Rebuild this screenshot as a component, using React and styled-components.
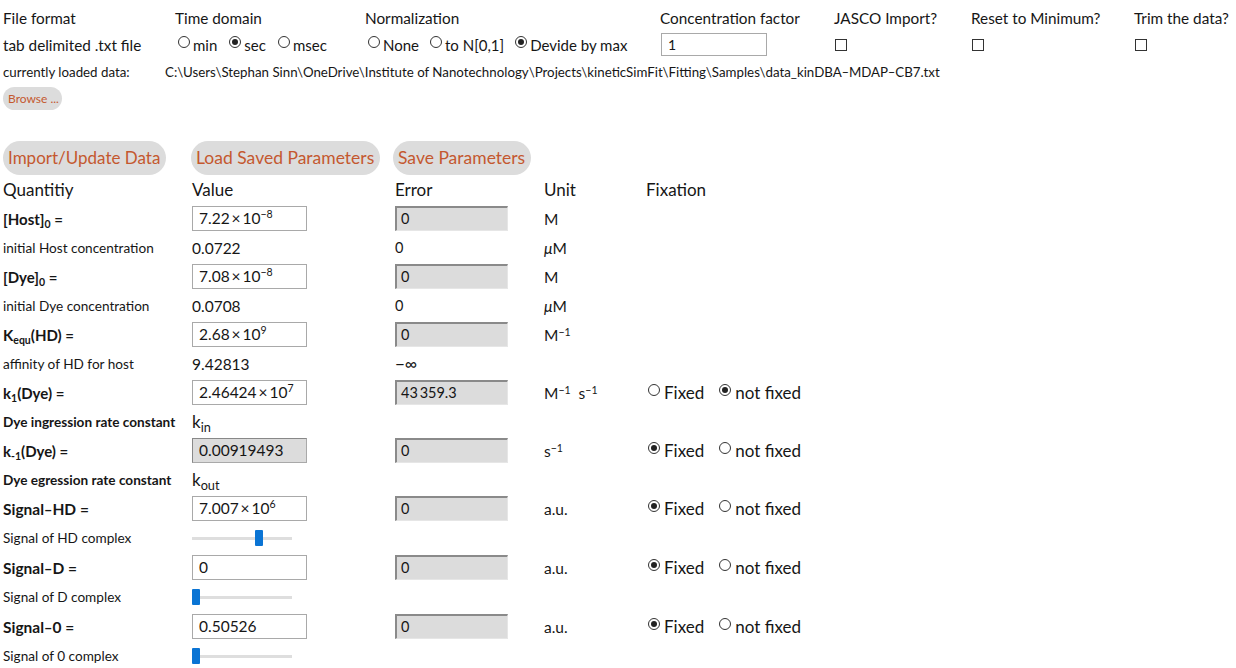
import React from 'react';
import styled, { createGlobalStyle } from 'styled-components';

const Global = createGlobalStyle`
  html, body { margin: 0; padding: 0; background: #fff; }
  body { font-family: Lato, "Noto Sans", sans-serif; color: #161616; }
  * { box-sizing: border-box; }
`;

const Page = styled.div`
  padding-left: 3px;
  width: 1236px;
`;

const TopGrid = styled.div`
  display: grid;
  grid-template-columns: 172px 190px 295px 174px 137px 163px 1fr;
  grid-template-rows: 27px 27px;
  padding-top: 4px;
  align-items: center;
  font-size: 15.3px;
  white-space: nowrap;
`;

const RadioGroup = styled.div`
  display: flex;
  align-items: center;
  gap: ${p => p.$gap || 6}px;
  padding-left: ${p => p.$pad || 0}px;
  font-size: ${p => p.$size || 15}px;
`;

const RadioItem = styled.span`
  display: inline-flex;
  align-items: center;
  gap: ${p => p.$inner || 3}px;
`;

const Dot = styled.span`
  width: 12px;
  height: 12px;
  border-radius: 50%;
  border: 1px solid #333;
  position: relative;
  top: -3px;
  background: #fff;
  flex: none;
  &::after {
    content: '';
    display: ${p => (p.$on ? 'block' : 'none')};
    position: absolute;
    left: 2px;
    top: 2px;
    width: 6px;
    height: 6px;
    border-radius: 50%;
    background: #222;
  }
`;

const Radio = ({ on, inner, children }) => (
  <RadioItem $inner={inner}>
    <Dot $on={on} />
    {children}
  </RadioItem>
);

const FactorInput = styled.div`
  width: 106px;
  height: 23px;
  border: 1px solid #a9a9a9;
  padding-left: 6px;
  font-size: 14px;
  line-height: 21px;
  margin-left: 1px;
`;

const Check = styled.span`
  display: block;
  width: 12px;
  height: 12px;
  border: 1px solid #333;
  margin-left: 1px;
`;

const PathRow = styled.div`
  display: grid;
  grid-template-columns: 162px 1fr;
  height: 27px;
  align-items: center;
  font-size: 13.3px;
  white-space: nowrap;
`;

const Browse = styled.div`
  margin-top: 2px;
  width: 59px;
  height: 23px;
  border-radius: 12px;
  background: #dcdcdc;
  color: #c4582f;
  font-size: 12px;
  line-height: 23px;
  padding-left: 5px;
`;

const ButtonRow = styled.div`
  margin-top: 31px;
  height: 34px;
  display: grid;
  grid-template-columns: 188px 202px 1fr;
`;

const PillButton = styled.div`
  height: 34px;
  border-radius: 17px;
  background: #dcdcdc;
  color: #c4582f;
  font-size: ${p => p.$size || 17}px;
  line-height: 34px;
  padding: 0 6px 0 5px;
  justify-self: start;
  white-space: nowrap;
`;

const Table = styled.div`
  display: grid;
  grid-template-columns: 189px 203px 149px 101px 1fr;
  grid-template-rows: 29px repeat(10, 29px) 29px 30px 29px 30px 29px 30px;
  align-items: center;
  white-space: nowrap;
`;

const Head = styled.div`
  font-size: 17px;
  padding-left: ${p => p.$pad || 0}px;
`;

const Label = styled.div`
  font-weight: 700;
  font-size: ${p => p.$size || 15}px;
  sub { font-size: 0.7em; vertical-align: -0.25em; line-height: 0; }
`;

const SubLabel = styled.div`
  font-size: 13.6px;
  font-weight: ${p => (p.$bold ? 700 : 400)};
`;

const ValueBox = styled.div`
  width: 115px;
  height: 25px;
  border: 1px solid #a9a9a9;
  background: ${p => (p.$disabled ? '#dcdcdc' : '#fff')};
  border-top-color: ${p => (p.$disabled ? '#888' : '#a9a9a9')};
  border-left-color: ${p => (p.$disabled ? '#888' : '#a9a9a9')};
  padding-left: 6px;
  font-size: 15.5px;
  line-height: 23px;
  sup { font-size: 0.68em; vertical-align: 0.55em; line-height: 0; }
`;

const ErrorBox = styled.div`
  width: 113px;
  height: 25px;
  background: #dcdcdc;
  border-top: 2px solid #8a8a8a;
  border-left: 2px solid #8a8a8a;
  border-right: 1px solid #e6e6e6;
  border-bottom: 1px solid #e6e6e6;
  padding-left: 4px;
  font-size: 14.5px;
  line-height: 22px;
`;

const Plain = styled.div`
  font-size: ${p => p.$size || 15.5}px;
  padding-left: ${p => p.$pad || 0}px;
  sup { font-size: 0.68em; vertical-align: 0.5em; line-height: 0; }
  sub { font-size: 0.75em; vertical-align: -0.3em; line-height: 0; }
  i { font-style: italic; }
`;

const Slider = styled.div`
  position: relative;
  width: 100px;
  height: 16px;
  &::before {
    content: '';
    position: absolute;
    left: 0;
    right: 0;
    top: 7px;
    height: 3px;
    background: #dedede;
  }
`;

const Thumb = styled.span`
  position: absolute;
  top: 0;
  width: 8px;
  height: 16px;
  background: #0a74d4;
  border-radius: 1px;
`;

const Empty = styled.div``;

const Fix = ({ fixed }) => (
  <RadioGroup $gap={15} $size={17} $pad={3}>
    <Radio on={fixed} inner={4}>Fixed</Radio>
    <Radio on={!fixed} inner={4}>not fixed</Radio>
  </RadioGroup>
);

const Sci = ({ m, e }) => (
  <>
    {m}&thinsp;×&thinsp;10<sup>{e}</sup>
  </>
);

export default function App() {
  return (
    <Page>
      <Global />
      <TopGrid>
        <div>File format</div>
        <div>Time domain</div>
        <div>Normalization</div>
        <div>Concentration factor</div>
        <div>JASCO Import?</div>
        <div>Reset to Minimum?</div>
        <div>Trim the data?</div>

        <div>tab delimited .txt file</div>
        <RadioGroup $pad={3} $gap={12}>
          <Radio>min</Radio>
          <Radio on>sec</Radio>
          <Radio>msec</Radio>
        </RadioGroup>
        <RadioGroup $pad={3} $gap={11}>
          <Radio>None</Radio>
          <Radio>to N[0,1]</Radio>
          <Radio on>Devide by max</Radio>
        </RadioGroup>
        <FactorInput>1</FactorInput>
        <Check />
        <Check />
        <Check />
      </TopGrid>

      <PathRow>
        <div>currently loaded data:</div>
        <div>
          C:\Users\Stephan Sinn\OneDrive\Institute of Nanotechnology\Projects\kineticSimFit\Fitting\Samples\data_kinDBA‒MDAP‒CB7.txt
        </div>
      </PathRow>
      <Browse>Browse ...</Browse>

      <ButtonRow>
        <PillButton>Import/Update Data</PillButton>
        <PillButton $size={17.5}>Load Saved Parameters</PillButton>
        <PillButton $size={17.5}>Save Parameters</PillButton>
      </ButtonRow>

      <Table>
        <Head>Quantitiy</Head>
        <Head>Value</Head>
        <Head>Error</Head>
        <Head>Unit</Head>
        <Head $pad={1}>Fixation</Head>

        <Label>[Host]<sub>0</sub> =</Label>
        <ValueBox><Sci m="7.22" e="−8" /></ValueBox>
        <ErrorBox>0</ErrorBox>
        <Plain>M</Plain>
        <Empty />

        <SubLabel>initial Host concentration</SubLabel>
        <Plain>0.0722</Plain>
        <Plain $size={14.5}>0</Plain>
        <Plain><i>μ</i>M</Plain>
        <Empty />

        <Label>[Dye]<sub>0</sub> =</Label>
        <ValueBox><Sci m="7.08" e="−8" /></ValueBox>
        <ErrorBox>0</ErrorBox>
        <Plain>M</Plain>
        <Empty />

        <SubLabel>initial Dye concentration</SubLabel>
        <Plain>0.0708</Plain>
        <Plain $size={14.5}>0</Plain>
        <Plain><i>μ</i>M</Plain>
        <Empty />

        <Label>K<sub>equ</sub>(HD) =</Label>
        <ValueBox><Sci m="2.68" e="9" /></ValueBox>
        <ErrorBox>0</ErrorBox>
        <Plain>M<sup>−1</sup></Plain>
        <Empty />

        <SubLabel>affinity of HD for host</SubLabel>
        <Plain>9.42813</Plain>
        <Plain $size={17}>−∞</Plain>
        <Empty />
        <Empty />

        <Label>k<sub>1</sub>(Dye) =</Label>
        <ValueBox><Sci m="2.46424" e="7" /></ValueBox>
        <ErrorBox>43&thinsp;359.3</ErrorBox>
        <Plain>M<sup>−1</sup>&nbsp; s<sup>−1</sup></Plain>
        <Fix fixed={false} />

        <SubLabel $bold>Dye ingression rate constant</SubLabel>
        <Plain $size={17}>k<sub>in</sub></Plain>
        <Empty />
        <Empty />
        <Empty />

        <Label>k<sub>-1</sub>(Dye) =</Label>
        <ValueBox $disabled>0.00919493</ValueBox>
        <ErrorBox>0</ErrorBox>
        <Plain>s<sup>−1</sup></Plain>
        <Fix fixed />

        <SubLabel $bold>Dye egression rate constant</SubLabel>
        <Plain $size={17}>k<sub>out</sub></Plain>
        <Empty />
        <Empty />
        <Empty />

        <Label $size={15.5}>Signal‒HD =</Label>
        <ValueBox><Sci m="7.007" e="6" /></ValueBox>
        <ErrorBox>0</ErrorBox>
        <Plain>a.u.</Plain>
        <Fix fixed />

        <SubLabel>Signal of HD complex</SubLabel>
        <Slider><Thumb style={{ left: '63px' }} /></Slider>
        <Empty />
        <Empty />
        <Empty />

        <Label $size={15.5}>Signal‒D =</Label>
        <ValueBox>0</ValueBox>
        <ErrorBox>0</ErrorBox>
        <Plain>a.u.</Plain>
        <Fix fixed />

        <SubLabel>Signal of D complex</SubLabel>
        <Slider><Thumb style={{ left: '0px' }} /></Slider>
        <Empty />
        <Empty />
        <Empty />

        <Label $size={15.5}>Signal‒0 =</Label>
        <ValueBox>0.50526</ValueBox>
        <ErrorBox>0</ErrorBox>
        <Plain>a.u.</Plain>
        <Fix fixed />

        <SubLabel>Signal of 0 complex</SubLabel>
        <Slider><Thumb style={{ left: '0px' }} /></Slider>
        <Empty />
        <Empty />
        <Empty />
      </Table>
    </Page>
  );
}
